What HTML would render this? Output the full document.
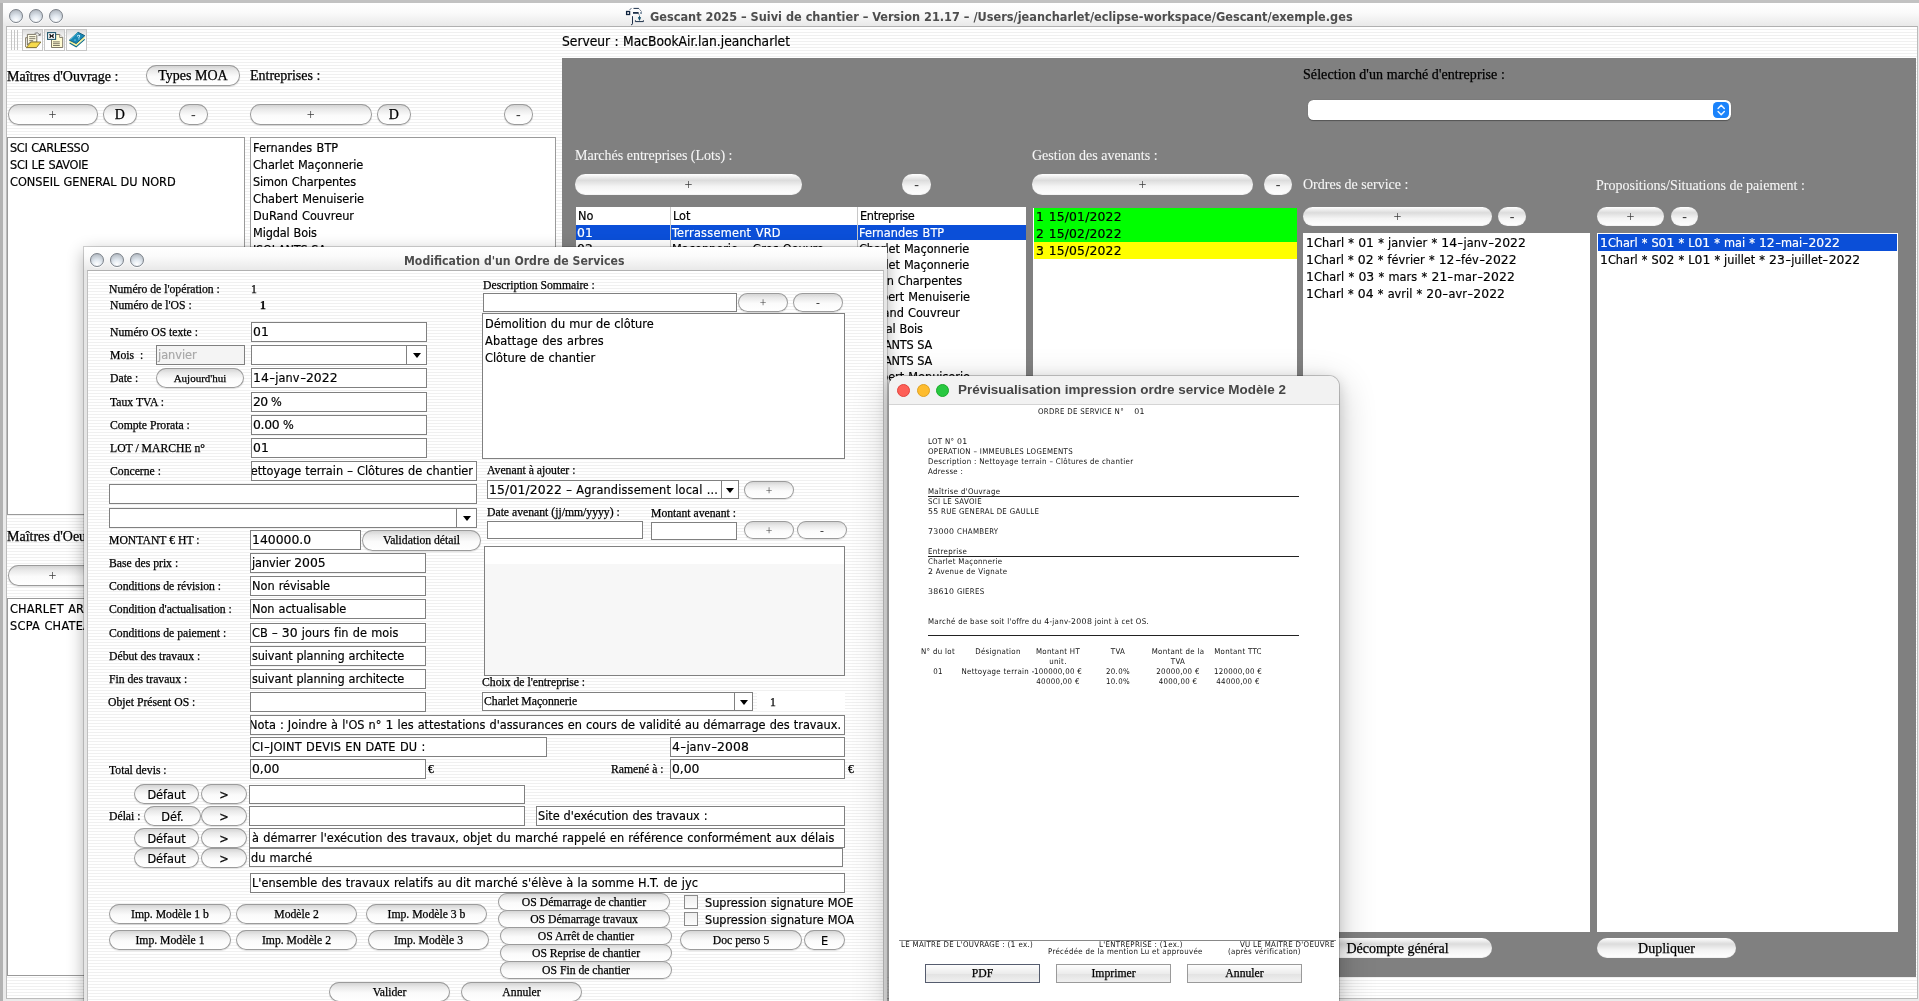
<!DOCTYPE html>
<html lang="fr"><head><meta charset="utf-8"><title>Gescant 2025 – Suivi de chantier</title>
<style>
html,body{margin:0;padding:0}
body{width:1919px;height:1001px;overflow:hidden;position:relative;background:#d9d9d9;font-family:"DejaVu Sans Condensed","Liberation Sans",sans-serif;font-size:13px;color:#000}
body div,body svg.abs{position:absolute;box-sizing:content-box}
#main{left:0;top:0;width:1919px;height:1001px;background:#ebebeb;overflow:hidden}
.tb{background:linear-gradient(#fff,#fbfbfb 40%,#e9e9e9)}
.gl{width:12px;height:12px;border-radius:50%;border:1px solid #7c828a;background:radial-gradient(circle at 50% 85%,#fff 0,#e4ebf2 35%,#b9c0c8 80%,#9aa0a8 100%);box-shadow:0 1px 0 rgba(255,255,255,.8)}
.pin{background:repeating-linear-gradient(#fff 0,#fff 2px,#f0f0f0 2px,#f0f0f0 3px)}
.t{white-space:pre}
.sf{font-family:"Liberation Serif",serif;font-size:14px}
.sf12{font-family:"Liberation Serif",serif;font-size:11.7px}
.ss{font-family:"DejaVu Sans Condensed","Liberation Sans",sans-serif;font-size:12.6px}
.w{color:#fff}
.ttl{font-family:"DejaVu Sans Condensed","Liberation Sans",sans-serif;font-weight:bold;font-size:12.6px;color:#4d4d4d}
.tbb{width:19px;height:20px;border:1px solid #c6c6c6;background:linear-gradient(#dddddd,#f2f2f2 30%,#fefefe 55%)}
.ab{text-align:center;white-space:pre;background:linear-gradient(#cfcfcf 0,#e9e9e9 25%,#fbfbfb 55%,#fff 100%);box-shadow:inset 0 0 0 1px #9b9b9b,0 1px 1px rgba(0,0,0,.12);overflow:hidden}
.ab.g{box-shadow:inset 0 -1px 1px rgba(0,0,0,.05);background:linear-gradient(#fff 0,#dcdcdc 30%,#f4f4f4 60%,#fff 100%)}
.lst{background:#fff;border:1px solid #9a9a9a}
.tf{background:#fff;border:1px solid #808080;white-space:pre;overflow:hidden;padding:0}
.tf span{margin-left:1px}
.cba{right:0;top:0;height:100%;border-left:1px solid #808080;background:#fff}
.cba .arr{left:50%;top:50%;margin:-2px 0 0 -4px;width:0;height:0;border:4px solid transparent;border-top:5px solid #000;border-bottom:0}
#dlg{left:84px;top:247px;width:803px;height:760px;background:#e6e6e6;box-shadow:0 0 0 1px rgba(0,0,0,.16),0 5px 16px rgba(0,0,0,.32);overflow:hidden}
.sf11{font-family:"Liberation Serif",serif;font-size:11px}
.sf13{font-family:"Liberation Serif",serif;font-size:13px}
.chk{background:linear-gradient(#ededed,#fdfdfd);border:1px solid #8a8a8a}
#pv{left:889px;top:376px;width:450px;height:640px;background:#fff;border-radius:10px 10px 0 0;box-shadow:0 0 0 1px rgba(0,0,0,.2),0 10px 36px 2px rgba(0,0,0,.2),0 3px 14px rgba(0,0,0,.16);overflow:hidden}
.ptb{background:#f2f2f2;border-bottom:1px solid #d4d4d4}
.tl{width:11px;height:11px;border-radius:50%;border:0.5px solid #000}
.ptt{font-family:"Liberation Sans",sans-serif;font-weight:bold;font-size:13.45px;color:#454545}
.pp{font-family:"DejaVu Sans Condensed","Liberation Sans",sans-serif;font-size:7.8px;color:#111;letter-spacing:.32px}
.pb{text-align:center;border:1px solid #9a9a9a;background:linear-gradient(#fdfdfd,#ececec 50%,#e2e2e2 51%,#f0f0f0)}
.ss b{font-size:12.4px}
.ss b,.pp b{font-weight:normal;font-family:"DejaVu Sans","Liberation Sans",sans-serif}
.ss{word-spacing:.5px}
.ss i{font-style:normal;display:inline-block;width:6.4px;text-align:center;transform:scaleX(1.45)}
#root{left:0;top:0;width:1919px;height:1001px;will-change:transform}
.sf,.sf12,.sf11{-webkit-text-stroke:.25px currentColor}
.ss{-webkit-text-stroke:.18px currentColor}
.w.sf{-webkit-text-stroke:.08px currentColor;color:#f6f6f6}

</style></head><body>
<div id="root">
<div id="main">
<div class="tb" style="left:3px;top:3px;width:1916px;height:23px;"></div>
<div class="gl" style="left:9px;top:9px;"></div>
<div class="gl" style="left:29px;top:9px;"></div>
<div class="gl" style="left:49px;top:9px;"></div>
<svg class="abs" style="left:620px;top:4px" width="40" height="24" viewBox="620 4 40 24"><g fill="none" stroke="#10243f" stroke-width=".95"><rect x="626.600" y="11.500" width="3" height="3" fill="#fff" stroke-width="1.300"/><path d="M633.500 8.400h5.300"/><path d="M629.600 10l2.200-2.300M638.800 8.600l2.800 3" stroke-dasharray="1 .8"/><path d="M633 12.900h5.600" stroke-width="1.700"/><path d="M640.400 13h1.300" stroke-width="1.600" stroke="#173a5c"/><path d="M632.500 16.200v7.600q0 .9-1.400 1"/><path d="M638.500 13.600l1 1.800" stroke-dasharray="1 .6"/><path d="M638.400 17.200l1.100 2.400 1.100-2.400" stroke="#1b5470" stroke-width="1.200"/><path d="M639.500 16v3.500" stroke="#1b5470"/><path d="M635.400 20.300v1.300h8v-1.300"/></g></svg>
<div class="t ttl" style="left:650px;top:6.5px;height:20px;line-height:20px;">Gescant 2025 – Suivi de chantier – Version 21.17 – /Users/jeancharlet/eclipse-workspace/Gescant/exemple.ges</div>
<div class="abs" style="left:0;top:0;width:2.5px;height:1001px;background:#b2b2b2"></div>
<div class="abs" style="left:0;top:0;width:1919px;height:2.5px;background:#c2c2c2"></div>
<div class="pin" style="left:6px;top:26px;width:1910px;height:971px;border:1px solid #bcbcbc;border-top-color:#b0b0b0"></div>
<div class="abs" style="left:11px;top:30px;width:1px;height:20px;background:#c6c6c6"></div>
<div class="abs" style="left:14px;top:30px;width:1px;height:20px;background:#c6c6c6"></div>
<div class="abs" style="left:17px;top:30px;width:1px;height:20px;background:#c6c6c6"></div>
<div class="tbb" style="left:22px;top:29px;"></div>
<div class="tbb" style="left:44px;top:29px;"></div>
<div class="tbb" style="left:66px;top:29px;"></div>
<svg class="abs" style="left:20px;top:26px" width="70" height="28" viewBox="20 26 70 28"><path d="M25.600 47v-9.300h1.600" fill="none" stroke="#7a7058" stroke-width=".9"/><path d="M27.400 45V34.400h8.200l1.200 1.200v6.600H30z" fill="#fffde6" stroke="#6e6858" stroke-width=".9"/><path d="M29.200 36.700h6.200M29.200 38.700h6.200M29.200 40.700h4" stroke="#6e6858" stroke-width=".9"/><path d="M26.300 47.500l4.700-5.500h9.900l-4.400 5.500z" fill="#f6da4c" stroke="#7d6c2c" stroke-width=".9" stroke-linejoin="round"/><path d="M26 47.700h10.600" stroke="#8a7a3a" stroke-width=".8"/><path d="M34.600 33.300q2.800-1.800 5.200 1.600" fill="none" stroke="#6a6a6a" stroke-width=".9"/><path d="M40.600 33v2.700h-2.600z" fill="#6a6a6a"/><path d="M51.500 34.500h8.200l3 3v10H51.500z" fill="#fffbd2" stroke="#6e6858" stroke-width=".9"/><path d="M59.700 34.500v3h3" fill="#fff" stroke="#6e6858" stroke-width=".8"/><path d="M53 41.900h6.800M53 43.700h6.800M53 45.500h6.800" stroke="#6e6858" stroke-width=".9"/><rect x="47.600" y="32.600" width="8" height="6.800" fill="#fff" stroke="#1f566c" stroke-width="1.100"/><path d="M49.600 34.200q2 1.800 0 3.600M53.600 34.200q-2 1.800 0 3.600M50.300 36h2.600" stroke="#111" stroke-width="1.300" fill="none"/><path d="M69.500 41v1.700l6.700 3.500 8.500-7.600V37z" fill="#f6f29c"/><path d="M69.300 40.200l8.700-8 6.800 3.500-8.600 7.900z" fill="#1787b5" stroke="#0b5674" stroke-width=".9" stroke-linejoin="round"/><path d="M70.400 39.600l7.800-7.200" stroke="#5fd0e8" stroke-width=".8"/><path d="M69.600 43.100l6.600 3.700 8.500-7.500" fill="none" stroke="#0b6a86" stroke-width="1.100"/><text x="76.600" y="39.600" font-size="6.500" font-weight="bold" fill="#d8f6ff" font-family="Liberation Sans,sans-serif" transform="rotate(-12 78 37)">?</text><path d="M75 39.400v1.400" stroke="#9fe8f8" stroke-width=".9"/></svg>
<div class="t ss" style="left:562px;top:30.5px;height:20px;line-height:20px;letter-spacing:-0.010px;font-size:13.7px">Serveur : MacBookAir.lan.jeancharlet</div>
<div class="t sf" style="left:7px;top:67.0px;height:20px;line-height:20px;">Maîtres d'Ouvrage :</div>
<div class="ab sf" style="left:146px;top:65px;width:94px;height:20.5px;line-height:21.5px;border-radius:10.25px;">Types MOA</div>
<div class="t sf" style="left:250px;top:65.5px;height:20px;line-height:20px;">Entreprises :</div>
<div class="ab sf" style="left:7.5px;top:104px;width:90.0px;height:20.5px;line-height:21.5px;border-radius:10.25px;color:#3c3c3c;-webkit-text-stroke:0;">+</div>
<div class="ab sf" style="left:103px;top:104px;width:33.5px;height:20.5px;line-height:21.5px;border-radius:10.25px;">D</div>
<div class="ab sf" style="left:179px;top:104px;width:28.5px;height:20.5px;line-height:21.5px;border-radius:10.25px;color:#3c3c3c;-webkit-text-stroke:0;">-</div>
<div class="ab sf" style="left:250px;top:104px;width:121.5px;height:20.5px;line-height:21.5px;border-radius:10.25px;color:#3c3c3c;-webkit-text-stroke:0;">+</div>
<div class="ab sf" style="left:377px;top:104px;width:33.5px;height:20.5px;line-height:21.5px;border-radius:10.25px;">D</div>
<div class="ab sf" style="left:504px;top:104px;width:28.5px;height:20.5px;line-height:21.5px;border-radius:10.25px;color:#3c3c3c;-webkit-text-stroke:0;">-</div>
<div class="lst" style="left:7px;top:137px;width:236px;height:376px;"></div>
<div class="t ss" style="left:10px;top:137.5px;height:20px;line-height:20px;letter-spacing:-0.322px;">SCI CARLESSO</div>
<div class="t ss" style="left:10px;top:154.5px;height:20px;line-height:20px;letter-spacing:-0.241px;">SCI LE SAVOIE</div>
<div class="t ss" style="left:10px;top:171.5px;height:20px;line-height:20px;letter-spacing:0.004px;">CONSEIL GENERAL DU NORD</div>
<div class="lst" style="left:250px;top:137px;width:304px;height:400px;"></div>
<div class="t ss" style="left:253px;top:137.5px;height:20px;line-height:20px;letter-spacing:0.081px;">Fernandes BTP</div>
<div class="t ss" style="left:253px;top:154.5px;height:20px;line-height:20px;letter-spacing:-0.059px;">Charlet Maçonnerie</div>
<div class="t ss" style="left:253px;top:171.5px;height:20px;line-height:20px;letter-spacing:-0.122px;">Simon Charpentes</div>
<div class="t ss" style="left:253px;top:188.5px;height:20px;line-height:20px;letter-spacing:-0.018px;">Chabert Menuiserie</div>
<div class="t ss" style="left:253px;top:205.5px;height:20px;line-height:20px;letter-spacing:0.010px;">DuRand Couvreur</div>
<div class="t ss" style="left:253px;top:222.5px;height:20px;line-height:20px;letter-spacing:-0.141px;">Migdal Bois</div>
<div class="t ss" style="left:253px;top:239.5px;height:20px;line-height:20px;letter-spacing:-0.243px;">ISOLANTS SA</div>
<div class="t sf" style="left:7px;top:526.5px;height:20px;line-height:20px;">Maîtres d'Oeuvre :</div>
<div class="ab sf" style="left:7.5px;top:565px;width:90.0px;height:20.5px;line-height:21.5px;border-radius:10.25px;color:#3c3c3c;-webkit-text-stroke:0;">+</div>
<div class="lst" style="left:7px;top:598px;width:236px;height:376px;"></div>
<div class="t ss" style="left:10px;top:598.5px;height:20px;line-height:20px;letter-spacing:0.200px;">CHARLET ARCHITECTE</div>
<div class="t ss" style="left:10px;top:615.5px;height:20px;line-height:20px;letter-spacing:0.280px;">SCPA CHATEAU</div>
<div class="abs" style="left:562px;top:58px;width:1354px;height:919px;background:#808080"></div>
<div class="t sf" style="left:1303px;top:64.5px;height:20px;line-height:20px;letter-spacing:.07px">Sélection d'un marché d'entreprise :</div>
<div class="abs" style="left:1308px;top:100px;width:422.5px;height:20px;background:#fff;border-radius:5.5px;box-shadow:0 0.5px 1px rgba(0,0,0,.35)"></div>
<svg class="abs" style="left:1713px;top:102px" width="16" height="16" viewBox="0 0 16 16"><rect width="16" height="16" rx="4.200" fill="#1b83fb"/><path d="M5.100 6.500l3.100-3.200 3.100 3.200M5.100 9.500l3.100 3.200 3.100-3.200" fill="none" stroke="#f2f8ff" stroke-width="1.450" stroke-linecap="round" stroke-linejoin="round"/></svg>
<div class="t sf w" style="left:575px;top:145.5px;height:20px;line-height:20px;">Marchés entreprises (Lots) :</div>
<div class="ab g sf" style="left:575px;top:174px;width:227px;height:20.5px;line-height:21.5px;border-radius:10.25px;color:#3c3c3c;-webkit-text-stroke:0;">+</div>
<div class="ab g sf" style="left:902px;top:174px;width:29px;height:20.5px;line-height:21.5px;border-radius:10.25px;color:#3c3c3c;-webkit-text-stroke:0;">-</div>
<div class="t sf w" style="left:1032px;top:145.5px;height:20px;line-height:20px;">Gestion des avenants :</div>
<div class="ab g sf" style="left:1032px;top:174px;width:221px;height:20.5px;line-height:21.5px;border-radius:10.25px;color:#3c3c3c;-webkit-text-stroke:0;">+</div>
<div class="ab g sf" style="left:1264px;top:174px;width:28px;height:20.5px;line-height:21.5px;border-radius:10.25px;color:#3c3c3c;-webkit-text-stroke:0;">-</div>
<div class="t sf w" style="left:1303px;top:174.5px;height:20px;line-height:20px;">Ordres de service :</div>
<div class="ab g sf" style="left:1303px;top:207px;width:189px;height:19px;line-height:20px;border-radius:9.5px;color:#3c3c3c;-webkit-text-stroke:0;">+</div>
<div class="ab g sf" style="left:1498px;top:207px;width:28px;height:19px;line-height:20px;border-radius:9.5px;color:#3c3c3c;-webkit-text-stroke:0;">-</div>
<div class="t sf w" style="left:1596px;top:175.5px;height:20px;line-height:20px;">Propositions/Situations de paiement :</div>
<div class="ab g sf" style="left:1597px;top:207px;width:67px;height:19px;line-height:20px;border-radius:9.5px;color:#3c3c3c;-webkit-text-stroke:0;">+</div>
<div class="ab g sf" style="left:1671px;top:207px;width:27px;height:19px;line-height:20px;border-radius:9.5px;color:#3c3c3c;-webkit-text-stroke:0;">-</div>
<div class="abs" style="left:576px;top:207px;width:450px;height:770px;background:#fff"></div>
<div class="abs" style="left:576px;top:225px;width:450px;height:15px;background:#0b4fd8"></div>
<div class="abs" style="left:670px;top:207px;width:1px;height:400px;background:#c8c8c8"></div>
<div class="abs" style="left:857px;top:207px;width:1px;height:400px;background:#c8c8c8"></div>
<div class="t ss" style="left:578px;top:205.5px;height:20px;line-height:20px;">No</div>
<div class="t ss" style="left:673px;top:205.5px;height:20px;line-height:20px;">Lot</div>
<div class="t ss" style="left:860px;top:205.5px;height:20px;line-height:20px;letter-spacing:-0.352px;">Entreprise</div>
<div class="t ss w" style="left:577px;top:222.5px;height:20px;line-height:20px;"><b>01</b></div>
<div class="t ss w" style="left:672px;top:222.5px;height:20px;line-height:20px;letter-spacing:0.260px;">Terrassement VRD</div>
<div class="t ss w" style="left:859px;top:222.5px;height:20px;line-height:20px;letter-spacing:0.081px;">Fernandes BTP</div>
<div class="t ss" style="left:577px;top:238.5px;height:20px;line-height:20px;"><b>02</b></div>
<div class="t ss" style="left:672px;top:238.5px;height:20px;line-height:20px;">Maçonnerie <i>-</i> Gros Oeuvre</div>
<div class="t ss" style="left:859px;top:238.5px;height:20px;line-height:20px;letter-spacing:-0.059px;">Charlet Maçonnerie</div>
<div class="t ss" style="left:577px;top:254.5px;height:20px;line-height:20px;"><b>03</b></div>
<div class="t ss" style="left:672px;top:254.5px;height:20px;line-height:20px;">Maçonnerie</div>
<div class="t ss" style="left:859px;top:254.5px;height:20px;line-height:20px;letter-spacing:-0.059px;">Charlet Maçonnerie</div>
<div class="t ss" style="left:577px;top:270.5px;height:20px;line-height:20px;"><b>04</b></div>
<div class="t ss" style="left:672px;top:270.5px;height:20px;line-height:20px;">Charpente</div>
<div class="t ss" style="left:859px;top:270.5px;height:20px;line-height:20px;letter-spacing:-0.122px;">Simon Charpentes</div>
<div class="t ss" style="left:577px;top:286.5px;height:20px;line-height:20px;"><b>05</b></div>
<div class="t ss" style="left:672px;top:286.5px;height:20px;line-height:20px;">Menuiserie</div>
<div class="t ss" style="left:859px;top:286.5px;height:20px;line-height:20px;letter-spacing:-0.018px;">Chabert Menuiserie</div>
<div class="t ss" style="left:577px;top:302.5px;height:20px;line-height:20px;"><b>06</b></div>
<div class="t ss" style="left:672px;top:302.5px;height:20px;line-height:20px;">Couverture</div>
<div class="t ss" style="left:859px;top:302.5px;height:20px;line-height:20px;letter-spacing:0.010px;">DuRand Couvreur</div>
<div class="t ss" style="left:577px;top:318.5px;height:20px;line-height:20px;"><b>07</b></div>
<div class="t ss" style="left:672px;top:318.5px;height:20px;line-height:20px;">Bois</div>
<div class="t ss" style="left:859px;top:318.5px;height:20px;line-height:20px;letter-spacing:-0.141px;">Migdal Bois</div>
<div class="t ss" style="left:577px;top:334.5px;height:20px;line-height:20px;"><b>08</b></div>
<div class="t ss" style="left:672px;top:334.5px;height:20px;line-height:20px;">Isolation</div>
<div class="t ss" style="left:859px;top:334.5px;height:20px;line-height:20px;letter-spacing:-0.243px;">ISOLANTS SA</div>
<div class="t ss" style="left:577px;top:350.5px;height:20px;line-height:20px;"><b>09</b></div>
<div class="t ss" style="left:672px;top:350.5px;height:20px;line-height:20px;">Isolation <b>2</b></div>
<div class="t ss" style="left:859px;top:350.5px;height:20px;line-height:20px;letter-spacing:-0.243px;">ISOLANTS SA</div>
<div class="t ss" style="left:577px;top:366.5px;height:20px;line-height:20px;"><b>10</b></div>
<div class="t ss" style="left:672px;top:366.5px;height:20px;line-height:20px;">Menuiserie <b>2</b></div>
<div class="t ss" style="left:859px;top:366.5px;height:20px;line-height:20px;letter-spacing:-0.018px;">Chabert Menuiserie</div>
<div class="abs" style="left:1033px;top:208px;width:264px;height:770px;background:#fff"></div>
<div class="abs" style="left:1034px;top:208px;width:263px;height:17px;background:#00ff00"></div>
<div class="t ss" style="left:1036px;top:207.0px;height:20px;line-height:20px;letter-spacing:0.163px;"><b>1 15/01/2022</b></div>
<div class="abs" style="left:1034px;top:225px;width:263px;height:17px;background:#00ff00"></div>
<div class="t ss" style="left:1036px;top:224.0px;height:20px;line-height:20px;letter-spacing:0.163px;"><b>2 15/02/2022</b></div>
<div class="abs" style="left:1034px;top:242px;width:263px;height:17px;background:#ffff00"></div>
<div class="t ss" style="left:1036px;top:241.0px;height:20px;line-height:20px;letter-spacing:0.163px;"><b>3 15/05/2022</b></div>
<div class="abs" style="left:1303px;top:233px;width:287px;height:699px;background:#fff"></div>
<div class="t ss" style="left:1306px;top:232.5px;height:20px;line-height:20px;letter-spacing:0.061px;"><b>1</b>Charl * <b>01</b> * janvier * <b>14</b><i>-</i>janv<i>-</i><b>2022</b></div>
<div class="t ss" style="left:1306px;top:249.5px;height:20px;line-height:20px;letter-spacing:0.022px;"><b>1</b>Charl * <b>02</b> * février * <b>12</b><i>-</i>fév<i>-</i><b>2022</b></div>
<div class="t ss" style="left:1306px;top:266.5px;height:20px;line-height:20px;letter-spacing:0.086px;"><b>1</b>Charl * <b>03</b> * mars * <b>21</b><i>-</i>mar<i>-</i><b>2022</b></div>
<div class="t ss" style="left:1306px;top:283.5px;height:20px;line-height:20px;letter-spacing:0.029px;"><b>1</b>Charl * <b>04</b> * avril * <b>20</b><i>-</i>avr<i>-</i><b>2022</b></div>
<div class="abs" style="left:1597px;top:233px;width:301px;height:699px;background:#fff"></div>
<div class="abs" style="left:1598px;top:234px;width:299px;height:17px;background:#0b4fd8"></div>
<div class="t ss w" style="left:1600px;top:232.5px;height:20px;line-height:20px;letter-spacing:-0.018px;"><b>1</b>Charl * S<b>01</b> * L<b>01</b> * mai * <b>12</b><i>-</i>mai<i>-</i><b>2022</b></div>
<div class="t ss" style="left:1600px;top:249.5px;height:20px;line-height:20px;letter-spacing:-0.011px;"><b>1</b>Charl * S<b>02</b> * L<b>01</b> * juillet * <b>23</b><i>-</i>juillet<i>-</i><b>2022</b></div>
<div class="ab g sf" style="left:1303px;top:938px;width:189px;height:20px;line-height:21px;border-radius:10.0px;">Décompte général</div>
<div class="ab g sf" style="left:1597px;top:938px;width:139px;height:20px;line-height:21px;border-radius:10.0px;">Dupliquer</div>
</div>
<div id="dlg">
<div class="tb" style="left:0px;top:0px;width:803px;height:23px;"></div>
<div class="gl" style="left:6px;top:6px;"></div>
<div class="gl" style="left:26px;top:6px;"></div>
<div class="gl" style="left:46px;top:6px;"></div>
<div class="pin" style="left:3px;top:23px;width:795px;height:740px;border:1px solid #c0c0c0;border-top-color:#b0b0b0"></div>
</div>
<div class="t ttl" style="left:404px;top:250.5px;height:20px;line-height:20px;font-size:12.15px">Modification d'un Ordre de Services</div>
<div class="t sf12" style="left:109px;top:280.0px;height:20px;line-height:20px;">Numéro de l'opération :</div>
<div class="t sf12" style="left:251px;top:280.0px;height:20px;line-height:20px;">1</div>
<div class="t sf12" style="left:110px;top:296.0px;height:20px;line-height:20px;">Numéro de l'OS :</div>
<div class="t sf12" style="left:260px;top:296.0px;height:20px;line-height:20px;font-weight:bold">1</div>
<div class="t sf12" style="left:110px;top:323.0px;height:20px;line-height:20px;">Numéro OS texte :</div>
<div class="tf ss" style="left:251px;top:322px;width:174px;height:18px;line-height:18px;"><span style=""><b>01</b></span></div>
<div class="t sf12" style="left:110px;top:346.0px;height:20px;line-height:20px;">Mois  :</div>
<div class="tf ss" style="left:156px;top:345px;width:87px;height:18px;line-height:18px;background:#f4f4f4;color:#a8a8a8"><span style="">janvier</span></div>
<div class="tf ss" style="left:251px;top:345px;width:174px;height:18px;line-height:18px;"><span></span><div class="cba" style="width:19px;"><div class="arr"></div></div></div>
<div class="t sf12" style="left:110px;top:369.0px;height:20px;line-height:20px;">Date :</div>
<div class="ab sf11" style="left:156px;top:368px;width:88px;height:20px;line-height:21px;border-radius:10.0px;">Aujourd'hui</div>
<div class="tf ss" style="left:251px;top:368px;width:174px;height:18px;line-height:18px;letter-spacing:0.062px;"><span style=""><b>14</b><i>-</i>janv<i>-</i><b>2022</b></span></div>
<div class="t sf12" style="left:110px;top:393.0px;height:20px;line-height:20px;">Taux TVA :</div>
<div class="tf ss" style="left:251px;top:392px;width:174px;height:18px;line-height:18px;letter-spacing:-0.588px;"><span style=""><b>20</b> %</span></div>
<div class="t sf12" style="left:110px;top:416.0px;height:20px;line-height:20px;">Compte Prorata :</div>
<div class="tf ss" style="left:251px;top:415px;width:174px;height:18px;line-height:18px;letter-spacing:-0.328px;"><span style=""><b>0.00</b> %</span></div>
<div class="t sf12" style="left:110px;top:439.0px;height:20px;line-height:20px;">LOT / MARCHE n°</div>
<div class="tf ss" style="left:251px;top:438px;width:174px;height:18px;line-height:18px;"><span style=""><b>01</b></span></div>
<div class="t sf12" style="left:110px;top:462.0px;height:20px;line-height:20px;">Concerne :</div>
<div class="tf ss" style="left:251px;top:461px;width:224px;height:18px;line-height:18px;"><span style="position:absolute;right:3px;">Nettoyage terrain – Clôtures de chantier</span></div>
<div class="tf ss" style="left:109px;top:484px;width:366px;height:18px;line-height:18px;"></div>
<div class="tf ss" style="left:109px;top:508px;width:366px;height:17.5px;line-height:17.5px;"><span></span><div class="cba" style="width:19px;"><div class="arr"></div></div></div>
<div class="t sf12" style="left:109px;top:531.0px;height:20px;line-height:20px;">MONTANT € HT :</div>
<div class="tf ss" style="left:250px;top:530px;width:109px;height:18px;line-height:18px;letter-spacing:0.009px;"><span style=""><b>140000.0</b></span></div>
<div class="ab sf12" style="left:362px;top:529.5px;width:119px;height:21.0px;line-height:22.0px;border-radius:10.5px;">Validation détail</div>
<div class="t sf12" style="left:109px;top:554.0px;height:20px;line-height:20px;">Base des prix :</div>
<div class="tf ss" style="left:250px;top:553px;width:174px;height:18px;line-height:18px;letter-spacing:-0.075px;"><span style="">janvier <b>2005</b></span></div>
<div class="t sf12" style="left:109px;top:577.0px;height:20px;line-height:20px;">Conditions de révision :</div>
<div class="tf ss" style="left:250px;top:576px;width:174px;height:18px;line-height:18px;letter-spacing:0.004px;"><span style="">Non révisable</span></div>
<div class="t sf12" style="left:109px;top:600.0px;height:20px;line-height:20px;">Condition d'actualisation :</div>
<div class="tf ss" style="left:250px;top:599px;width:174px;height:18px;line-height:18px;letter-spacing:-0.044px;"><span style="">Non actualisable</span></div>
<div class="t sf12" style="left:109px;top:624.0px;height:20px;line-height:20px;">Conditions de paiement :</div>
<div class="tf ss" style="left:250px;top:623px;width:174px;height:18px;line-height:18px;letter-spacing:0.055px;"><span style="">CB – <b>30</b> jours fin de mois</span></div>
<div class="t sf12" style="left:109px;top:647.0px;height:20px;line-height:20px;">Début des travaux :</div>
<div class="tf ss" style="left:250px;top:646px;width:174px;height:18px;line-height:18px;letter-spacing:-0.134px;"><span style="">suivant planning architecte</span></div>
<div class="t sf12" style="left:109px;top:670.0px;height:20px;line-height:20px;">Fin des travaux :</div>
<div class="tf ss" style="left:250px;top:669px;width:174px;height:18px;line-height:18px;letter-spacing:-0.134px;"><span style="">suivant planning architecte</span></div>
<div class="t sf12" style="left:108px;top:693.0px;height:20px;line-height:20px;">Objet Présent OS :</div>
<div class="tf ss" style="left:250px;top:692px;width:174px;height:18px;line-height:18px;"></div>
<div class="tf ss" style="left:250px;top:715px;width:593px;height:18px;line-height:18px;"><span style="position:absolute;right:3px;">Nota : Joindre à l'OS n° <b>1</b> les attestations d'assurances en cours de validité au démarrage des travaux.</span></div>
<div class="tf ss" style="left:250px;top:737px;width:295px;height:18px;line-height:18px;letter-spacing:0.169px;"><span style="">CI<i>-</i>JOINT DEVIS EN DATE DU :</span></div>
<div class="tf ss" style="left:670px;top:737px;width:173px;height:18px;line-height:18px;letter-spacing:0.088px;"><span style=""><b>4</b><i>-</i>janv<i>-</i><b>2008</b></span></div>
<div class="t sf12" style="left:109px;top:761.0px;height:20px;line-height:20px;">Total devis :</div>
<div class="tf ss" style="left:250px;top:759px;width:174px;height:18px;line-height:18px;letter-spacing:-0.048px;"><span style=""><b>0,00</b></span></div>
<div class="t sf12" style="left:428px;top:760.0px;height:20px;line-height:20px;">€</div>
<div class="t sf12" style="left:611px;top:760.0px;height:20px;line-height:20px;">Ramené à :</div>
<div class="tf ss" style="left:670px;top:759px;width:173px;height:18px;line-height:18px;letter-spacing:-0.048px;"><span style=""><b>0,00</b></span></div>
<div class="t sf12" style="left:848px;top:760.0px;height:20px;line-height:20px;">€</div>
<div class="ab ss" style="left:134px;top:784px;width:65px;height:20px;line-height:21px;border-radius:10.0px;">Défaut</div>
<div class="ab ss" style="left:201px;top:784px;width:46px;height:20px;line-height:21px;border-radius:10.0px;">&gt;</div>
<div class="tf ss" style="left:249px;top:785px;width:274px;height:17px;line-height:17px;"></div>
<div class="t sf12" style="left:109px;top:807.0px;height:20px;line-height:20px;">Délai :</div>
<div class="ab ss" style="left:144px;top:806px;width:57px;height:20px;line-height:21px;border-radius:10.0px;">Déf.</div>
<div class="ab ss" style="left:201px;top:806px;width:46px;height:20px;line-height:21px;border-radius:10.0px;">&gt;</div>
<div class="tf ss" style="left:249px;top:806px;width:274px;height:18px;line-height:18px;"></div>
<div class="tf ss" style="left:536px;top:806px;width:307px;height:18px;line-height:18px;letter-spacing:-0.052px;"><span style="">Site d'exécution des travaux :</span></div>
<div class="ab ss" style="left:134px;top:828px;width:65px;height:20px;line-height:21px;border-radius:10.0px;">Défaut</div>
<div class="ab ss" style="left:201px;top:828px;width:46px;height:20px;line-height:21px;border-radius:10.0px;">&gt;</div>
<div class="tf ss" style="left:249px;top:828px;width:594px;height:18px;line-height:18px;letter-spacing:0.066px;text-indent:1px"><span style="">à démarrer l'exécution des travaux, objet du marché rappelé en référence conformément aux délais</span></div>
<div class="ab ss" style="left:134px;top:848px;width:65px;height:20px;line-height:21px;border-radius:10.0px;">Défaut</div>
<div class="ab ss" style="left:201px;top:848px;width:46px;height:20px;line-height:21px;border-radius:10.0px;">&gt;</div>
<div class="tf ss" style="left:249px;top:848px;width:592px;height:17px;line-height:17px;"><span style="">du marché</span></div>
<div class="tf ss" style="left:250px;top:873px;width:593px;height:18px;line-height:18px;letter-spacing:0.051px;"><span style="">L'ensemble des travaux relatifs au dit marché s'élève à la somme H.T. de jyc</span></div>
<div class="ab sf12" style="left:109px;top:904px;width:122px;height:20px;line-height:21px;border-radius:10.0px;">Imp. Modèle 1 b</div>
<div class="ab sf12" style="left:236px;top:904px;width:121px;height:20px;line-height:21px;border-radius:10.0px;">Modèle 2</div>
<div class="ab sf12" style="left:366px;top:904px;width:121px;height:20px;line-height:21px;border-radius:10.0px;">Imp. Modèle 3 b</div>
<div class="ab sf12" style="left:109px;top:930px;width:122px;height:20px;line-height:21px;border-radius:10.0px;">Imp. Modèle 1</div>
<div class="ab sf12" style="left:236px;top:930px;width:121px;height:20px;line-height:21px;border-radius:10.0px;">Imp. Modèle 2</div>
<div class="ab sf12" style="left:368px;top:930px;width:121px;height:20px;line-height:21px;border-radius:10.0px;">Imp. Modèle 3</div>
<div class="ab sf12" style="left:498px;top:893px;width:172px;height:18px;line-height:19px;border-radius:9.0px;">OS Démarrage de chantier</div>
<div class="ab sf12" style="left:498px;top:910px;width:172px;height:18px;line-height:19px;border-radius:9.0px;">OS Démarrage travaux</div>
<div class="ab sf12" style="left:500px;top:927px;width:172px;height:18px;line-height:19px;border-radius:9.0px;">OS Arrêt de chantier</div>
<div class="ab sf12" style="left:500px;top:944px;width:172px;height:18px;line-height:19px;border-radius:9.0px;">OS Reprise de chantier</div>
<div class="ab sf12" style="left:500px;top:961px;width:172px;height:18px;line-height:19px;border-radius:9.0px;">OS Fin de chantier</div>
<div class="chk" style="left:684px;top:895px;width:12px;height:12px;"></div>
<div class="t ss" style="left:705px;top:892.5px;height:20px;line-height:20px;letter-spacing:-0.041px;">Supression signature MOE</div>
<div class="chk" style="left:684px;top:912px;width:12px;height:12px;"></div>
<div class="t ss" style="left:705px;top:909.5px;height:20px;line-height:20px;letter-spacing:-0.032px;">Supression signature MOA</div>
<div class="ab sf12" style="left:680px;top:930px;width:122px;height:20px;line-height:21px;border-radius:10.0px;">Doc perso 5</div>
<div class="ab ss" style="left:804px;top:930px;width:41px;height:20px;line-height:21px;border-radius:10.0px;">E</div>
<div class="ab sf12" style="left:329px;top:982px;width:121px;height:20px;line-height:21px;border-radius:10.0px;">Valider</div>
<div class="ab sf12" style="left:461px;top:982px;width:121px;height:20px;line-height:21px;border-radius:10.0px;">Annuler</div>
<div class="t sf12" style="left:483px;top:276.0px;height:20px;line-height:20px;">Description Sommaire :</div>
<div class="tf ss" style="left:483px;top:293px;width:252px;height:17px;line-height:17px;"></div>
<div class="ab sf12" style="left:738px;top:293px;width:50px;height:19px;line-height:20px;border-radius:9.5px;color:#3c3c3c;-webkit-text-stroke:0;line-height:22px;">+</div>
<div class="ab sf12" style="left:793px;top:293px;width:50px;height:19px;line-height:20px;border-radius:9.5px;color:#3c3c3c;-webkit-text-stroke:0;line-height:22px;">-</div>
<div class="lst" style="left:482px;top:313px;width:361px;height:144px;border-color:#808080"></div>
<div class="t ss" style="left:485px;top:314.0px;height:20px;line-height:20px;letter-spacing:-0.005px;">Démolition du mur de clôture</div>
<div class="t ss" style="left:485px;top:331.0px;height:20px;line-height:20px;letter-spacing:0.137px;">Abattage des arbres</div>
<div class="t ss" style="left:485px;top:348.0px;height:20px;line-height:20px;letter-spacing:0.006px;">Clôture de chantier</div>
<div class="t sf12" style="left:487px;top:461.0px;height:20px;line-height:20px;">Avenant à ajouter :</div>
<div class="tf ss" style="left:487px;top:480px;width:250px;height:17px;line-height:17px;letter-spacing:0.158px;"><span><b>15/01/2022</b> – Agrandissement local ...</span><div class="cba" style="width:16px;"><div class="arr"></div></div></div>
<div class="ab sf12" style="left:744px;top:481px;width:50px;height:18px;line-height:19px;border-radius:9.0px;color:#3c3c3c;-webkit-text-stroke:0;line-height:21px;">+</div>
<div class="t sf12" style="left:487px;top:503.0px;height:20px;line-height:20px;">Date avenant (jj/mm/yyyy) :</div>
<div class="t sf12" style="left:651px;top:504.0px;height:20px;line-height:20px;">Montant avenant :</div>
<div class="tf ss" style="left:487px;top:521px;width:154px;height:16px;line-height:16px;"></div>
<div class="tf ss" style="left:651px;top:522px;width:84px;height:16px;line-height:16px;"></div>
<div class="ab sf12" style="left:744px;top:521px;width:50px;height:18px;line-height:19px;border-radius:9.0px;color:#3c3c3c;-webkit-text-stroke:0;line-height:21px;">+</div>
<div class="ab sf12" style="left:797px;top:521px;width:50px;height:18px;line-height:19px;border-radius:9.0px;color:#3c3c3c;-webkit-text-stroke:0;line-height:21px;">-</div>
<div class="lst" style="left:484px;top:546px;width:359px;height:128px;border-color:#808080;background:#f7f7f7"></div>
<div class="abs" style="left:485px;top:547px;width:359px;height:17px;background:#fff"></div>
<div class="t sf12" style="left:482px;top:673.0px;height:20px;line-height:20px;">Choix de l'entreprise :</div>
<div class="tf sf12" style="left:482px;top:692px;width:269px;height:17px;line-height:17px;"><span>Charlet Maçonnerie</span><div class="cba" style="width:17px;"><div class="arr"></div></div></div>
<div class="abs" style="left:757px;top:693px;width:88px;height:18px;background:#fff"></div>
<div class="t sf12" style="left:770px;top:693.0px;height:20px;line-height:20px;">1</div>
<div id="pv">
<div class="ptb" style="left:0;top:0;width:450px;height:27.5px;"></div>
<div class="tl" style="left:8px;top:8px;background:#fe5f57;border-color:#e0443e"></div>
<div class="tl" style="left:28px;top:8px;background:#febc2e;border-color:#dea123"></div>
<div class="tl" style="left:47px;top:8px;background:#28c840;border-color:#1aab29"></div>
</div>
<div class="t ptt" style="left:958px;top:379.5px;height:20px;line-height:20px;">Prévisualisation impression ordre service Modèle 2</div>
<div class="t pp" style="left:1038px;top:407.0px;height:10px;line-height:10px;">ORDRE DE SERVICE N°    <b>01</b></div>
<div class="t pp" style="left:928px;top:437.0px;height:10px;line-height:10px;">LOT N° <b>01</b></div>
<div class="t pp" style="left:928px;top:447.0px;height:10px;line-height:10px;">OPERATION – IMMEUBLES LOGEMENTS</div>
<div class="t pp" style="left:928px;top:457.0px;height:10px;line-height:10px;">Description : Nettoyage terrain – Clôtures de chantier</div>
<div class="t pp" style="left:928px;top:467.0px;height:10px;line-height:10px;">Adresse :</div>
<div class="t pp" style="left:928px;top:487.0px;height:10px;line-height:10px;">Maîtrise d'Ouvrage</div>
<div class="t pp" style="left:928px;top:497.0px;height:10px;line-height:10px;">SCI LE SAVOIE</div>
<div class="t pp" style="left:928px;top:507.0px;height:10px;line-height:10px;"><b>55</b> RUE GENERAL DE GAULLE</div>
<div class="t pp" style="left:928px;top:527.0px;height:10px;line-height:10px;"><b>73000</b> CHAMBERY</div>
<div class="t pp" style="left:928px;top:547.0px;height:10px;line-height:10px;">Entreprise</div>
<div class="t pp" style="left:928px;top:557.0px;height:10px;line-height:10px;">Charlet Maçonnerie</div>
<div class="t pp" style="left:928px;top:567.0px;height:10px;line-height:10px;"><b>2</b> Avenue de Vignate</div>
<div class="t pp" style="left:928px;top:587.0px;height:10px;line-height:10px;"><b>38610</b> GIERES</div>
<div class="t pp" style="left:928px;top:617.0px;height:10px;line-height:10px;">Marché de base soit l'offre du <b>4</b>-janv-<b>2008</b> joint à cet OS.</div>
<div class="abs" style="left:928px;top:495.5px;width:371px;height:1px;background:#222"></div>
<div class="abs" style="left:928px;top:555.5px;width:371px;height:1px;background:#222"></div>
<div class="abs" style="left:928px;top:635px;width:371px;height:1px;background:#222"></div>
<div class="t pp" style="left:878px;width:120px;text-align:center;top:647px;height:10px;line-height:10px;">N° du lot</div>
<div class="t pp" style="left:938px;width:120px;text-align:center;top:647px;height:10px;line-height:10px;">Désignation</div>
<div class="t pp" style="left:998px;width:120px;text-align:center;top:647px;height:10px;line-height:10px;">Montant HT</div>
<div class="t pp" style="left:1058px;width:120px;text-align:center;top:647px;height:10px;line-height:10px;">TVA</div>
<div class="t pp" style="left:1118px;width:120px;text-align:center;top:647px;height:10px;line-height:10px;">Montant de la</div>
<div class="t pp" style="left:1178px;width:120px;text-align:center;top:647px;height:10px;line-height:10px;">Montant TTC</div>
<div class="t pp" style="left:998px;width:120px;text-align:center;top:657px;height:10px;line-height:10px;">unit.</div>
<div class="t pp" style="left:1118px;width:120px;text-align:center;top:657px;height:10px;line-height:10px;">TVA</div>
<div class="t pp" style="left:878px;width:120px;text-align:center;top:667px;height:10px;line-height:10px;">01</div>
<div class="t pp" style="left:938px;width:120px;text-align:center;top:667px;height:10px;line-height:10px;">Nettoyage terrain -</div>
<div class="t pp" style="left:998px;width:120px;text-align:center;top:667px;height:10px;line-height:10px;">100000,00 €</div>
<div class="t pp" style="left:1058px;width:120px;text-align:center;top:667px;height:10px;line-height:10px;">20.0%</div>
<div class="t pp" style="left:1118px;width:120px;text-align:center;top:667px;height:10px;line-height:10px;">20000,00 €</div>
<div class="t pp" style="left:1178px;width:120px;text-align:center;top:667px;height:10px;line-height:10px;">120000,00 €</div>
<div class="t pp" style="left:998px;width:120px;text-align:center;top:677px;height:10px;line-height:10px;">40000,00 €</div>
<div class="t pp" style="left:1058px;width:120px;text-align:center;top:677px;height:10px;line-height:10px;">10.0%</div>
<div class="t pp" style="left:1118px;width:120px;text-align:center;top:677px;height:10px;line-height:10px;">4000,00 €</div>
<div class="t pp" style="left:1178px;width:120px;text-align:center;top:677px;height:10px;line-height:10px;">44000,00 €</div>
<div class="abs" style="left:899px;top:939.5px;width:437px;height:1px;background:#888"></div>
<div class="t pp" style="left:901px;top:940.0px;height:10px;line-height:10px;">LE MAITRE DE L'OUVRAGE : (<b>1</b> ex.)</div>
<div class="t pp" style="left:1099px;top:940.0px;height:10px;line-height:10px;">L'ENTREPRISE : (<b>1</b>ex.)</div>
<div class="t pp" style="left:1240px;top:940.0px;height:10px;line-height:10px;">VU LE MAITRE D'OEUVRE</div>
<div class="t pp" style="left:1048px;top:946.5px;height:10px;line-height:10px;">Précédée de la mention Lu et approuvée</div>
<div class="t pp" style="left:1228px;top:946.5px;height:10px;line-height:10px;">(après vérification)</div>
<div class="pb sf12" style="left:925px;top:964px;width:113px;height:17px;line-height:17px;border-color:#555c6e;">PDF</div>
<div class="pb sf12" style="left:1056px;top:964px;width:113px;height:17px;line-height:17px;">Imprimer</div>
<div class="pb sf12" style="left:1187px;top:964px;width:113px;height:17px;line-height:17px;">Annuler</div>
</div>
</body></html>
